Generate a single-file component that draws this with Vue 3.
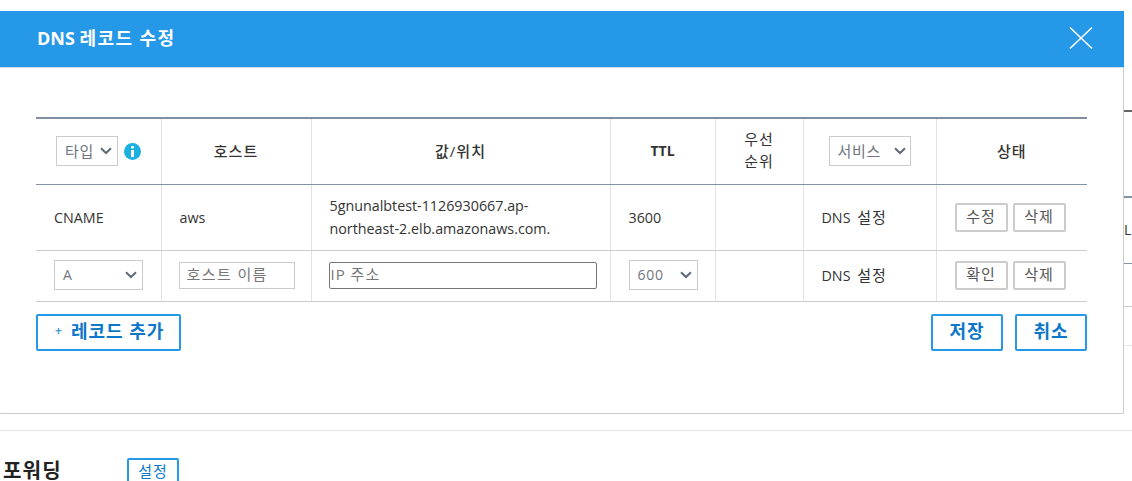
<script setup>
const chevron = 'M1 1.2 L6 6 L11 1.2'
</script>

<template>
  <div class="page">
    <div class="bg-strip">
      <div class="strip-row s1"></div>
      <div class="strip-row s2"></div>
      <div class="strip-row s3"><span>L</span></div>
      <div class="strip-row s4"></div>
      <div class="strip-row s5"></div>
    </div>
    <div class="divider"></div>
    <div class="forward">
      <h3 class="forward-title">포워딩</h3>
      <button class="forward-btn">설정</button>
    </div>

    <section class="modal">
      <header class="modal-head">
        <h2 class="modal-title">DNS <span class="title-ko">레코드 수정</span></h2>
        <svg class="close" width="24" height="22" viewBox="0 0 24 22" fill="none" stroke="#fff" stroke-width="1.5">
          <path d="M1 0.5 L23 21.5 M23 0.5 L1 21.5" />
        </svg>
      </header>
      <div class="modal-body">
        <table class="grid">
          <colgroup>
            <col style="width: 125px" />
            <col style="width: 150px" />
            <col style="width: 299px" />
            <col style="width: 105px" />
            <col style="width: 88px" />
            <col style="width: 133px" />
            <col style="width: 151px" />
          </colgroup>
          <thead>
            <tr>
              <th class="has-sel">
                <div class="type-head">
                  <div class="sel sel-type">
                    <span>타입</span>
                    <svg class="chev" width="12" height="8" viewBox="0 0 12 8"><path :d="chevron" fill="none" stroke="#5f6b78" stroke-width="2" /></svg>
                  </div>
                  <svg class="info" width="17" height="17" viewBox="0 0 17 17">
                    <circle cx="8.5" cy="8.5" r="8.5" fill="#1cb0e0" />
                    <rect x="7" y="3" width="3" height="2.6" rx="1" fill="#fff" />
                    <rect x="7" y="7" width="3" height="7" fill="#fff" />
                  </svg>
                </div>
              </th>
              <th>호스트</th>
              <th>값/위치</th>
              <th class="latin">TTL</th>
              <th class="prio">우선<br />순위</th>
              <th class="has-sel">
                <div class="sel sel-service">
                  <span>서비스</span>
                  <svg class="chev" width="12" height="8" viewBox="0 0 12 8"><path :d="chevron" fill="none" stroke="#5f6b78" stroke-width="2" /></svg>
                </div>
              </th>
              <th>상태</th>
            </tr>
          </thead>
          <tbody>
            <tr class="row-view">
              <td>CNAME</td>
              <td>aws</td>
              <td>5gnunalbtest-1126930667.ap-<br />northeast-2.elb.amazonaws.com.</td>
              <td>3600</td>
              <td></td>
              <td class="svc">DNS <span class="ko">설정</span></td>
              <td class="actions">
                <button class="mini">수정</button>
                <button class="mini">삭제</button>
              </td>
            </tr>
            <tr class="row-edit">
              <td>
                <div class="sel sel-a">
                  <span>A</span>
                  <svg class="chev" width="12" height="8" viewBox="0 0 12 8"><path :d="chevron" fill="none" stroke="#5f6b78" stroke-width="2" /></svg>
                </div>
              </td>
              <td class="input-cell"><input class="txt host" placeholder="호스트 이름" /></td>
              <td class="input-cell"><input class="txt ip" placeholder="IP 주소" /></td>
              <td>
                <div class="sel sel-ttl">
                  <span>600</span>
                  <svg class="chev" width="12" height="8" viewBox="0 0 12 8"><path :d="chevron" fill="none" stroke="#5f6b78" stroke-width="2" /></svg>
                </div>
              </td>
              <td></td>
              <td class="svc">DNS <span class="ko">설정</span></td>
              <td class="actions">
                <button class="mini">확인</button>
                <button class="mini">삭제</button>
              </td>
            </tr>
          </tbody>
        </table>
        <div class="foot">
          <button class="primary add"><span class="plus">+</span>레코드 추가</button>
          <div class="foot-right">
            <button class="primary act">저장</button>
            <button class="primary act">취소</button>
          </div>
        </div>
      </div>
    </section>
  </div>
</template>

<style>
html, body { margin: 0; background: #fff; overflow: hidden; }
</style>

<style scoped>
.page {
  position: relative;
  width: 1132px;
  height: 481px;
  overflow: hidden;
  background: #fff;
  font-family: "Open Sans", "Noto Sans CJK KR", sans-serif;
  color: #333;
  font-size: 14px;
}
.bg-strip { margin-left: 1124px; height: 346px; display: flex; flex-direction: column; }
.strip-row { box-sizing: border-box; }
.s1 { height: 112px; border-bottom: 2px solid #666; }
.s2 { height: 86px; border-bottom: 2px solid #8094a8; }
.s3 {
  height: 66px; border-bottom: 1px solid #8094a8; font-size: 14px; line-height: 20px; color: #333;
  padding-top: 22px;
}
.s3 span { display: block; width: 8px; overflow: hidden; }
.s4 { height: 43px; border-bottom: 1px solid #ccc; }
.s5 { height: 39px; border-bottom: 1px solid #e5e5e5; }
.divider { margin-top: 84px; height: 1px; background: #e5e5e5; }
.forward { display: flex; align-items: flex-start; padding: 27px 0 0 3px; }
.forward-title { margin: 0; width: 124px; font-size: 20px; letter-spacing: 1.2px; line-height: 26px; font-weight: 700; color: #222; }
.forward-btn {
  box-sizing: border-box; width: 52px; height: 28px; padding: 0 0 3px; background: #fff;
  border: 2px solid #2698e8; border-radius: 2px; color: #0d77c9; font: inherit; font-size: 15px; letter-spacing: 1px;
}
.modal {
  position: absolute; left: -1px; top: 11px; width: 1125px; height: 403px;
  box-sizing: border-box; background: #fff; border: 1px solid #ccc; border-top: 0;
  border-radius: 2px;
}
.modal-head {
  height: 56px; margin: 0 -1px; background: #2698e8; border-bottom: 1px solid #c9dff0;
  box-sizing: content-box; display: flex; align-items: center; justify-content: space-between;
  padding: 0 31px 0 38px;
}
.modal-title { margin: -4px 0 0; font-size: 18px; font-weight: 700; color: #fff; }
.title-ko { letter-spacing: 1.4px; }
.close { display: block; margin-top: -3px; }
.modal-body { padding: 49px 36px 0 36px; }
.grid {
  width: 1051px; border-collapse: collapse; table-layout: fixed;
  border-top: 2px solid #7f8f9f;
}
.grid th, .grid td { padding: 0; border-left: 1px solid #e2e2e2; }
.grid th:first-child, .grid td:first-child { border-left: 0; }
.grid th {
  box-sizing: border-box; height: 66px; padding-bottom: 2px; border-bottom: 1px solid #7f93a5;
  font-size: 15px; font-weight: 500; letter-spacing: 1px;
  color: #333; text-align: center; vertical-align: middle;
}
.grid th.has-sel { padding-bottom: 0; }
.grid th.latin { font-size: 14px; font-weight: 700; letter-spacing: 0; }
.grid th.prio { font-weight: 400; line-height: 22px; }
.grid td { font-size: 14.3px; line-height: 23px; color: #333; text-align: left; padding-left: 18px; vertical-align: middle; }
.grid td.input-cell { padding-left: 17px; }
.grid td.svc { word-spacing: 3px; }
.ko { font-size: 15px; letter-spacing: 1px; }
.row-view td { height: 65px; border-bottom: 1px solid #ccc; }
.row-edit td { box-sizing: border-box; height: 51px; padding-bottom: 1px; border-bottom: 1px solid #ccc; }
.grid td.actions { padding-left: 18px; white-space: nowrap; }
.type-head { display: flex; align-items: center; gap: 6px; padding-left: 20px; }
.sel {
  box-sizing: border-box; height: 30px; border: 1px solid #ccc; background: #fff; color: #6f7680;
  display: flex; align-items: center; justify-content: space-between; font-size: 15px; font-weight: 400; letter-spacing: .7px;
  padding: 0 5px 2px 8px;
}
.chev { display: block; flex: none; margin-top: 2px; }
.sel-type { width: 62px; }
.sel-service { width: 82px; margin-left: 25px; padding-right: 4px; }
.sel-a { width: 89px; font-size: 14px; }
.sel-ttl { width: 69px; font-size: 14px; }
.txt {
  box-sizing: border-box; height: 27px; background: #fff; font: inherit; font-size: 15px; display: block;
  padding: 0 1px 2px; outline: 0; letter-spacing: 1px;
}
.txt::placeholder { color: #777; opacity: 1; }
.host { width: 116px; border: 1px solid #ccc; padding-left: 7px; letter-spacing: 1.4px; }
.ip { width: 268px; border: 1px solid #767676; border-radius: 2px; }
.mini {
  box-sizing: border-box; width: 53px; height: 29px; padding: 0 0 2px; margin-right: 5px; vertical-align: middle;
  background: #fff; border: 2px solid #ccc; border-radius: 2px; color: #555; font: inherit; font-size: 15px; letter-spacing: 1px;
}
.foot { display: flex; justify-content: space-between; margin-top: 12px; }
.foot-right { display: flex; gap: 12px; }
.primary {
  box-sizing: border-box; height: 37px; padding: 0 0 4px; background: #fff; border: 2px solid #2698e8;
  border-radius: 2px; color: #0d77c9; font: inherit; font-size: 18px; font-weight: 700; letter-spacing: 1px;
}
.add { width: 145px; display: flex; align-items: center; padding-left: 17px; }
.plus { font-size: 12px; margin-right: 8px; color: #4a97d8; }
.act { width: 72px; }
</style>
